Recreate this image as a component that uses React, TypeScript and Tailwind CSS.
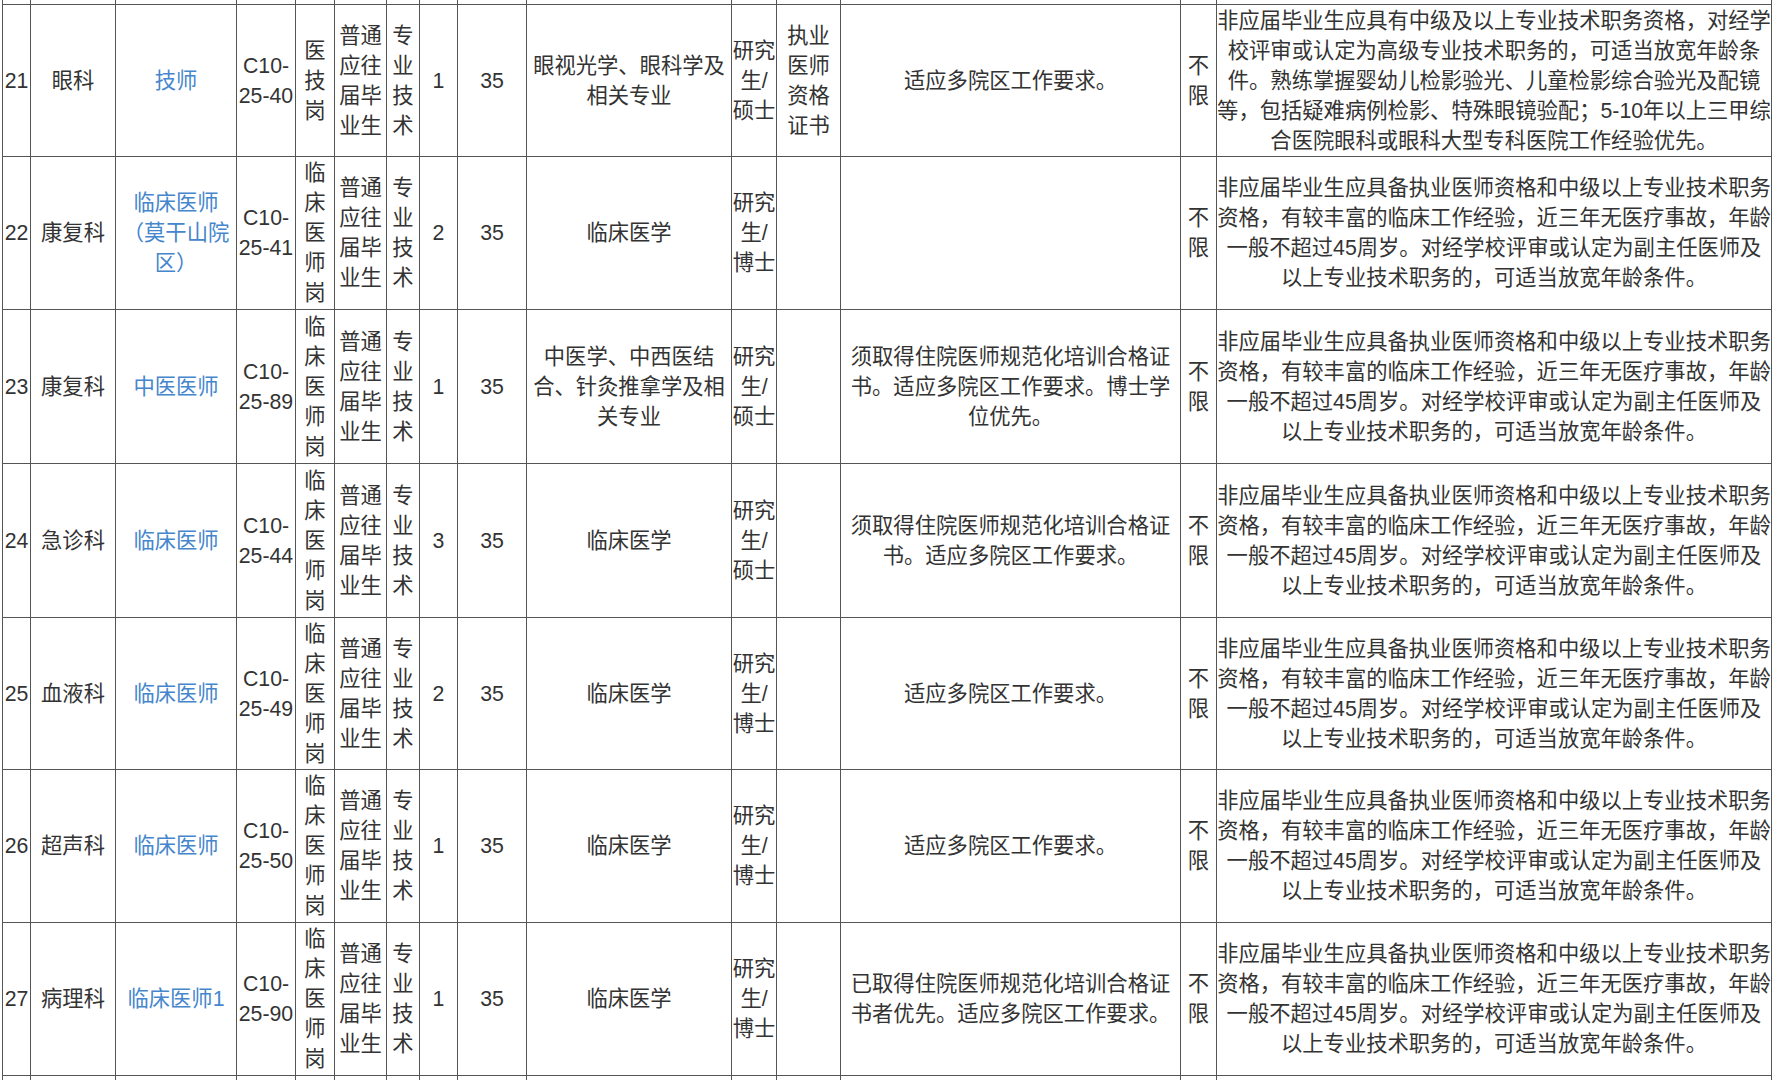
import React from 'react';

type Row = {
  no: string;
  dept: string;
  post: string;
  code: string;
  kind: string;
  count: string;
  age: string;
  major: string;
  edu: string;
  cert: string;
  other: string;
  note: string;
};

const remarkA =
  '非应届毕业生应具有中级及以上专业技术职务资格，对经学\n校评审或认定为高级专业技术职务的，可适当放宽年龄条\n件。熟练掌握婴幼儿检影验光、儿童检影综合验光及配镜\n等，包括疑难病例检影、特殊眼镜验配；5-10年以上三甲综\n合医院眼科或眼科大型专科医院工作经验优先。';

const remarkB =
  '非应届毕业生应具备执业医师资格和中级以上专业技术职务\n资格，有较丰富的临床工作经验，近三年无医疗事故，年龄\n一般不超过45周岁。对经学校评审或认定为副主任医师及\n以上专业技术职务的，可适当放宽年龄条件。';

const doctorPost = '临\n床\n医\n师\n岗';

const rows: Row[] = [
  {
    no: '21', dept: '眼科', post: '技师', code: 'C10-\n25-40', kind: '医\n技\n岗',
    count: '1', age: '35', major: '眼视光学、眼科学及\n相关专业', edu: '研究\n生/\n硕士', cert: '执业\n医师\n资格\n证书',
    other: '适应多院区工作要求。', note: remarkA,
  },
  {
    no: '22', dept: '康复科', post: '临床医师\n（莫干山院\n区）', code: 'C10-\n25-41', kind: doctorPost,
    count: '2', age: '35', major: '临床医学', edu: '研究\n生/\n博士', cert: '',
    other: '', note: remarkB,
  },
  {
    no: '23', dept: '康复科', post: '中医医师', code: 'C10-\n25-89', kind: doctorPost,
    count: '1', age: '35', major: '中医学、中西医结\n合、针灸推拿学及相\n关专业', edu: '研究\n生/\n硕士', cert: '',
    other: '须取得住院医师规范化培训合格证\n书。适应多院区工作要求。博士学\n位优先。', note: remarkB,
  },
  {
    no: '24', dept: '急诊科', post: '临床医师', code: 'C10-\n25-44', kind: doctorPost,
    count: '3', age: '35', major: '临床医学', edu: '研究\n生/\n硕士', cert: '',
    other: '须取得住院医师规范化培训合格证\n书。适应多院区工作要求。', note: remarkB,
  },
  {
    no: '25', dept: '血液科', post: '临床医师', code: 'C10-\n25-49', kind: doctorPost,
    count: '2', age: '35', major: '临床医学', edu: '研究\n生/\n博士', cert: '',
    other: '适应多院区工作要求。', note: remarkB,
  },
  {
    no: '26', dept: '超声科', post: '临床医师', code: 'C10-\n25-50', kind: doctorPost,
    count: '1', age: '35', major: '临床医学', edu: '研究\n生/\n博士', cert: '',
    other: '适应多院区工作要求。', note: remarkB,
  },
  {
    no: '27', dept: '病理科', post: '临床医师1', code: 'C10-\n25-90', kind: doctorPost,
    count: '1', age: '35', major: '临床医学', edu: '研究\n生/\n博士', cert: '',
    other: '已取得住院医师规范化培训合格证\n书者优先。适应多院区工作要求。', note: remarkB,
  },
];

const Cell = ({ text, blue, last }: { text: string; blue?: boolean; last?: boolean }) => (
  <div
    className={
      'flex items-center justify-center border-l border-t border-[#555] text-center whitespace-pre ' +
      (blue ? 'text-[#4586cc] ' : 'text-[#333] ') +
      (last ? 'border-r' : '')
    }
  >
    {text}
  </div>
);

const Stub = ({ top, last }: { top?: boolean; last?: boolean }) => (
  <div className={'border-l border-[#555] ' + (top ? 'border-t ' : '') + (last ? 'border-r' : '')} />
);

export default function App() {
  const cols = 15;

  return (
    <div className="h-[1080px] overflow-hidden bg-white">
      <div
        className="ml-[2px] grid w-[1770px] grid-cols-[28px_85px_121px_59px_39px_52px_33px_38px_69px_205px_45px_64px_340px_36px_556px] grid-rows-[4px_152px_153px_154px_154px_152px_153px_153px_5px] text-[21.3px] leading-[30px]"
        style={{ fontFamily: '"Liberation Sans", "Noto Sans CJK SC", sans-serif' }}
      >
        {/* tail of the previous row */}
        {Array.from({ length: cols }).map((_, i) => (
          <Stub key={'top' + i} last={i === cols - 1} />
        ))}

        {rows.map((r) => (
          <React.Fragment key={r.no}>
            <Cell text={r.no} />
            <Cell text={r.dept} />
            <Cell text={r.post} blue />
            <Cell text={r.code} />
            <Cell text={r.kind} />
            <Cell text={'普通\n应往\n届毕\n业生'} />
            <Cell text={'专\n业\n技\n术'} />
            <Cell text={r.count} />
            <Cell text={r.age} />
            <Cell text={r.major} />
            <Cell text={r.edu} />
            <Cell text={r.cert} />
            <Cell text={r.other} />
            <Cell text={'不\n限'} />
            <Cell text={r.note} last />
          </React.Fragment>
        ))}

        {/* head of the next row */}
        {Array.from({ length: cols }).map((_, i) => (
          <Stub key={'bot' + i} top last={i === cols - 1} />
        ))}
      </div>
    </div>
  );
}
